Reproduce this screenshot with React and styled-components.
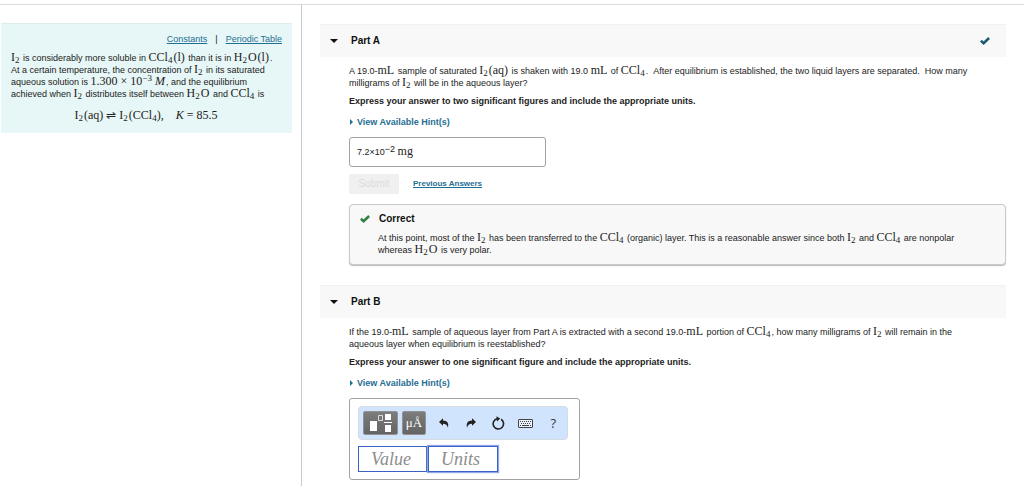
import React from "react";
import styled, { createGlobalStyle, css } from "styled-components";

const sans = `"Liberation Sans", Arial, sans-serif`;
const serif = `"Liberation Serif", "Times New Roman", serif`;

const GlobalStyle = createGlobalStyle`
    * {
        box-sizing: border-box;
    }

    body {
        margin: 0;
        background: #fff;
        color: #222;
        font-family: ${sans};
        font-size: 9px;
        line-height: 12px;
    }

    p {
        margin: 0;
    }

    a {
        color: #1f6f93;
    }
`;

const Page = styled.div`
    display: flex;
    min-height: 100vh;
    padding-top: 4px;
`;

const Sidebar = styled.aside`
    flex: 0 0 302px;
    padding: 18px 9px 0 1px;
    border-top: 1px solid #dcdcdc;
    border-right: 1px solid #c3cbd3;
`;

const Intro = styled.div`
    padding: 9px 10px;
    border-top: 1px solid #dfecec;
    background: #e7f6f6;
`;

const Links = styled.nav`
    display: flex;
    justify-content: flex-end;
    gap: 8px;
    margin-bottom: 7px;
`;

const Equation = styled.p`
    margin: 10px 0 2px;
    text-align: center;
`;

const Math = styled.span`
    margin-right: 1px;
    font-family: ${serif};
    font-size: 12px;
    line-height: 1px;

    sub,
    sup {
        font-size: 9px;
        line-height: 1px;
    }

    sub {
        vertical-align: -2px;
    }

    sup {
        vertical-align: 4px;
    }
`;

const Main = styled.main`
    flex: 1;
    min-width: 0;
    padding: 19px 18px 0;
    border-top: 1px solid #dcdcdc;
`;

const PartHeader = styled.header`
    display: flex;
    align-items: center;
    justify-content: space-between;
    height: 33px;
    padding: 0 16px 0 10px;
    background: #f8f8f8;
    border-top: 1px solid #f1f1f1;
`;

const PartToggle = styled.button`
    display: flex;
    align-items: center;
    gap: 13px;
    padding: 0;
    border: 0;
    background: none;
    color: #111;
    font: bold 10px/12px ${sans};
`;

const PartBody = styled.div`
    padding: 8px 0 20px 29px;
`;

const Question = styled.p`
    margin-bottom: 6px;
`;

const Instructions = styled.p`
    font-weight: bold;
`;

const HintButton = styled.button`
    display: flex;
    align-items: center;
    gap: 4px;
    margin: 9px 0;
    padding: 0 0 0 1px;
    border: 0;
    background: none;
    color: #1f6f93;
    font: bold 9px/12px ${sans};
`;

const AnswerBox = styled.output`
    display: block;
    width: 197px;
    padding: 8px 7px;
    border: 1px solid #a2a2a2;
    border-radius: 3px;
    line-height: 12px;

    > sup {
        font-size: 9px;
        line-height: 1px;
        vertical-align: 3px;
    }
`;

const Actions = styled.div`
    display: flex;
    align-items: center;
    gap: 14px;
    margin: 7px 0 10px;
    font-size: 8px;
    font-weight: bold;
`;

const SubmitButton = styled.button`
    width: 50px;
    height: 20px;
    padding: 0;
    border: 0;
    background: #f0f0f0;
    color: #dcdcdc;
    font: 10px/12px ${sans};
`;

const Feedback = styled.section`
    padding: 8px 28px;
    border: 1px solid #c9c9c9;
    border-radius: 4px;
    box-shadow: 0 1px 1px #bbb;
    background: #f8f8f8;
`;

const FeedbackTitle = styled.h3`
    display: flex;
    align-items: center;
    gap: 9px;
    margin: 0 0 7px -18px;
    color: #111;
    font-size: 10px;
`;

const Editor = styled.div`
    width: 231px;
    padding: 7px 8px;
    border: 1px solid #a2a2a2;
    border-radius: 3px;
`;

const Toolbar = styled.div`
    display: flex;
    align-items: center;
    width: 210px;
    height: 34px;
    padding: 0 0 0 4px;
    border: 1px solid #d5dbe3;
    border-radius: 4px;
    background: #d0e4fd;
`;

const ToolButton = styled.button`
    display: flex;
    flex: 1;
    align-items: center;
    justify-content: center;
    height: 24px;
    padding: 0;
    border: 0;
    background: none;
    color: #333;
    font: 13px/16px "Open Sans", ${sans};

    ${(props) =>
        props.$dark &&
        css`
            flex: 0 0 ${props.$wide ? "35px" : "24px"};
            margin-right: 4px;
            border: 1px solid #929292;
            border-radius: 2px;
            background: linear-gradient(#7c7c7c, #646464);
            color: #fff;
            font: 13px/16px ${serif};
        `}
`;

const Fields = styled.div`
    display: flex;
    gap: 1px;
    margin-top: 6px;
`;

const Field = styled.input`
    width: 69px;
    height: 26px;
    padding: 0 12px;
    border: 1px solid #3a62c4;
    outline: 0;
    background: #fff;
    font: italic 18px/20px ${serif};

    ${(props) =>
        props.$active &&
        css`
            width: 70px;
            box-shadow: 0 0 1px 1px #8fa9e6;
        `}

    &::placeholder {
        color: #8c8c8c;
        opacity: 1;
    }
`;

const I2 = () => (
    <Math>
        I<sub>2</sub>
    </Math>
);

const CCl4 = () => (
    <Math>
        CCl<sub>4</sub>
    </Math>
);

const H2O = () => (
    <Math>
        H<sub>2</sub>&#8202;O
    </Math>
);

const CheckIcon = ({ color }) => (
    <svg width="10" height="8" viewBox="0 0 10 8" aria-hidden="true">
        <path d="M0.9 3.8 L3.6 6.2 L9.1 1" fill="none" stroke={color} strokeWidth="2.5" />
    </svg>
);

const Part = ({ title, done, children }) => (
    <section>
        <PartHeader>
            <PartToggle type="button" aria-expanded="true">
                <svg width="8" height="4" viewBox="0 0 8 4" aria-hidden="true">
                    <path d="M0 0h8L4 4z" fill="#111" />
                </svg>
                {title}
            </PartToggle>
            {done && <CheckIcon color="#1b5a73" />}
        </PartHeader>
        <PartBody>{children}</PartBody>
    </section>
);

const Hints = () => (
    <HintButton type="button">
        <svg width="3" height="6" viewBox="0 0 3 6" aria-hidden="true">
            <path d="M0 0l3 3-3 3z" fill="#1f6f93" />
        </svg>
        View Available Hint(s)
    </HintButton>
);

const TemplateIcon = () => (
    <svg width="24" height="20" viewBox="0 0 24 20" aria-hidden="true">
        <path d="M1 8h7v10H1zM16 1h6v6h-6zM16 12h6v7h-6zM15 9h8v1h-8z" fill="#fff" />
        <path d="M9.5 2.5h4v5h-4z" fill="none" stroke="#ddd" />
    </svg>
);

const TurnIcon = ({ flip }) => (
    <svg width="10" height="10" viewBox="0 0 10 10" aria-hidden="true">
        <path
            d="M0 4 L4 0.3 V2.5 C8.2 2.6 9.9 5 9 9.7 C8.2 7 7 5.9 4 5.8 V7.8z"
            fill="#222"
            transform={flip ? "translate(10 0) scale(-1 1)" : undefined}
        />
    </svg>
);

const ResetIcon = () => (
    <svg width="13" height="14" viewBox="0 0 13 14" aria-hidden="true">
        <path d="M9.1 3.3 A5.2 5.2 0 1 1 5 2.7" fill="none" stroke="#222" strokeWidth="1.6" />
        <path d="M4.4 0.2 L8.2 2.6 L5 5.4z" fill="#222" />
    </svg>
);

const KeyboardIcon = () => (
    <svg width="15" height="9" viewBox="0 0 15 9" aria-hidden="true">
        <rect x="0.5" y="0.5" width="14" height="8" rx="0.5" fill="#e8f1fb" stroke="#444" />
        <path d="M2 2.5h11M3 4.5h10" stroke="#444" strokeDasharray="1 1" />
        <path d="M2 6.5h1M4 6.5h7M12 6.5h1" stroke="#444" />
    </svg>
);

export default function App() {
    return (
        <Page>
            <GlobalStyle />
            <Sidebar>
                <Intro>
                    <Links>
                        <a href="#constants">Constants</a>
                        <span>|</span>
                        <a href="#table">Periodic Table</a>
                    </Links>
                    <p>
                        <I2 /> is considerably more soluble in <CCl4 />
                        <Math>(l)</Math> than it is in <H2O />
                        <Math>(l)</Math>.<br />
                        At a certain temperature, the concentration of <I2 /> in its saturated
                        <br />
                        aqueous solution is{" "}
                        <Math>
                            1.300 × 10<sup>−3</sup> <i>M</i>
                        </Math>
                        , and the equilibrium
                        <br />
                        achieved when <I2 /> distributes itself between <H2O /> and <CCl4 /> is
                    </p>
                    <Equation>
                        <Math>
                            I<sub>2</sub>&#8202;(aq) ⇌ I<sub>2</sub>&#8202;(CCl<sub>4</sub>), &nbsp;&nbsp;&nbsp;
                            <i>K</i> = 85.5
                        </Math>
                    </Equation>
                </Intro>
            </Sidebar>

            <Main>
                <Part title="Part A" done>
                    <Question>
                        A 19.0-<Math>mL</Math> sample of saturated <I2 />
                        <Math>(aq)</Math> is shaken with 19.0 <Math>mL</Math> of <CCl4 />. &nbsp;After
                        equilibrium is established, the two liquid layers are separated. &nbsp;How many
                        <br />
                        milligrams of <I2 /> will be in the aqueous layer?
                    </Question>
                    <Instructions>
                        Express your answer to two significant figures and include the appropriate units.
                    </Instructions>
                    <Hints />
                    <AnswerBox>
                        7.2×10<sup>−2</sup> <Math>mg</Math>
                    </AnswerBox>
                    <Actions>
                        <SubmitButton type="button" disabled>
                            Submit
                        </SubmitButton>
                        <a href="#previous">Previous Answers</a>
                    </Actions>
                    <Feedback>
                        <FeedbackTitle>
                            <CheckIcon color="#2c8040" />
                            Correct
                        </FeedbackTitle>
                        <p>
                            At this point, most of the <I2 /> has been transferred to the <CCl4 /> (organic)
                            layer. This is a reasonable answer since both <I2 /> and <CCl4 /> are nonpolar
                            <br />
                            whereas <H2O /> is very polar.
                        </p>
                    </Feedback>
                </Part>

                <Part title="Part B">
                    <Question>
                        If the 19.0-<Math>mL</Math> sample of aqueous layer from Part A is extracted with a
                        second 19.0-<Math>mL</Math> portion of <CCl4 />, how many milligrams of <I2 /> will
                        remain in the
                        <br />
                        aqueous layer when equilibrium is reestablished?
                    </Question>
                    <Instructions>
                        Express your answer to one significant figure and include the appropriate units.
                    </Instructions>
                    <Hints />
                    <Editor>
                        <Toolbar>
                            <ToolButton $dark $wide type="button" aria-label="Templates">
                                <TemplateIcon />
                            </ToolButton>
                            <ToolButton $dark type="button">
                                μÅ
                            </ToolButton>
                            <ToolButton type="button" aria-label="Undo">
                                <TurnIcon />
                            </ToolButton>
                            <ToolButton type="button" aria-label="Redo">
                                <TurnIcon flip />
                            </ToolButton>
                            <ToolButton type="button" aria-label="Reset">
                                <ResetIcon />
                            </ToolButton>
                            <ToolButton type="button" aria-label="Keyboard">
                                <KeyboardIcon />
                            </ToolButton>
                            <ToolButton type="button">?</ToolButton>
                        </Toolbar>
                        <Fields>
                            <Field aria-label="Value" placeholder="Value" />
                            <Field $active aria-label="Units" placeholder="Units" />
                        </Fields>
                    </Editor>
                </Part>
            </Main>
        </Page>
    );
}
